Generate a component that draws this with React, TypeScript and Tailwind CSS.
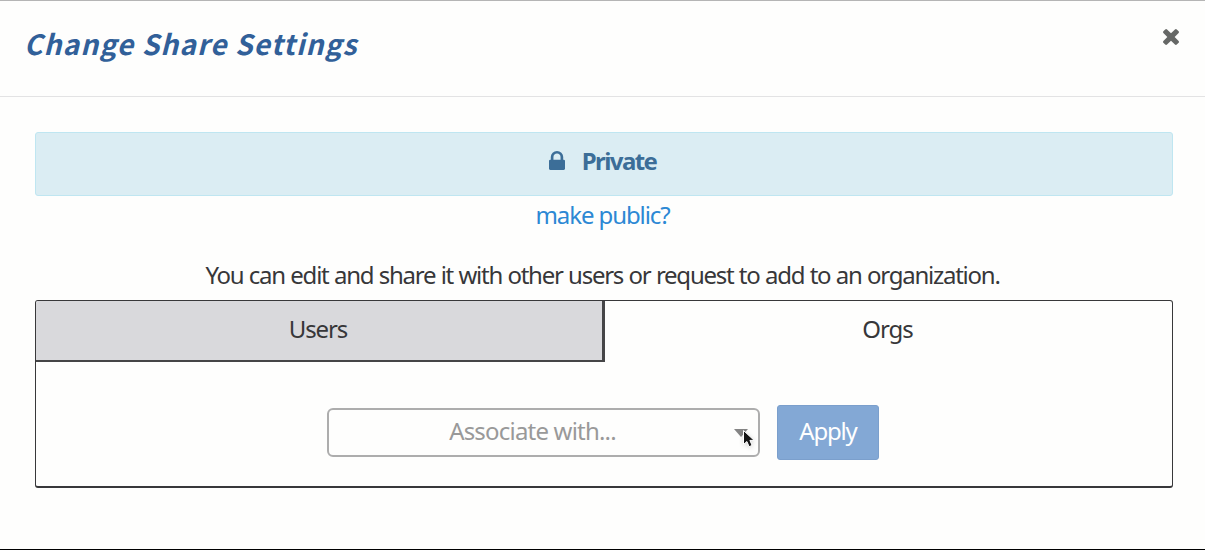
import React from "react";

function LockIcon() {
  return (
    <svg viewBox="0 128 1152 1408" preserveAspectRatio="none" className="mr-[17px] h-[19px] w-4 fill-current">
      <path d="M320 768h512v-192q0-106-75-181t-181-75-181 75-75 181v192zM1152 864v576q0 40-28 68t-68 28h-960q-40 0-68-28t-28-68v-576q0-40 28-68t68-28h32v-192q0-184 132-316t316-132 316 132 132 316v192h32q40 0 68 28t28 68z" />
    </svg>
  );
}

function CloseIcon() {
  return (
    <svg viewBox="110 366 1188 1188" className="size-4 fill-[#666866]">
      <path d="M1298 1322q0 40-28 68l-136 136q-28 28-68 28t-68-28l-294-294-294 294q-28 28-68 28t-68-28l-136-136q-28-28-28-68t28-68l294-294-294-294q-28-28-28-68t28-68l136-136q28-28 68-28t68 28l294 294 294-294q28-28 68-28t68 28l136 136q28 28 28 68t-28 68l-294 294 294 294q28 28 28 68z" />
    </svg>
  );
}

function Pointer() {
  return (
    <svg viewBox="0 0 14 20" className="absolute top-[19px] right-[2px] h-5 w-3.5 drop-shadow-sm">
      <path d="M1.5 1.5v14l3.4-3 2.2 5.2 3-1.3-2.2-5h4.3z" fill="#151515" stroke="#fff" strokeWidth="1" />
    </svg>
  );
}

export default function App() {
  return (
    <div className="relative flex h-[550px] w-[1205px] flex-col overflow-hidden border-t border-b border-t-[#b5b5b5] border-b-black bg-[#fefefd] font-['Noto_Sans',sans-serif] text-2xl leading-8 text-[#373739]">
      <div className="absolute -top-px left-[1134px] h-px w-2 bg-[#8aa6d8]" />
      <header className="flex h-24 shrink-0 items-start justify-between border-b border-[#e3e3e4] pr-[26px] pl-6">
        <h1 className="mt-[22px] font-['Noto_Sans_CJK_SC',sans-serif] text-[28px] leading-10 font-bold tracking-[1.15px] text-[#316099] italic">Change Share Settings</h1>
        <button aria-label="Close" className="mt-7"><CloseIcon /></button>
      </header>
      <main className="flex flex-col px-[35px] pt-[35px]">
        <div className="flex h-16 w-[1138px] items-center justify-center rounded-[3px] border border-[#bfe6f1] bg-[#dbedf3] pr-[3px] pb-[7px] font-bold text-[#3c6e98]">
          <LockIcon />
          <span className="tracking-[-1.6px]">Private</span>
        </div>
        <a className="mt-[3px] text-center tracking-[-1.1px] text-[#2c88d4]">make public?</a>
        <p className="mt-7 text-center tracking-[-1.25px] whitespace-nowrap [word-spacing:0.45px]">
          You can edit and share it with other users or request to add to an organization.
        </p>
        <section className="mt-[9px] h-[188px] w-[1138px] overflow-hidden rounded-[3px] border border-b-2 border-[#38383a]">
          <div className="flex h-[61px]">
            <div className="flex w-[569px] items-center justify-center border-r-[3px] border-b-2 border-[#454547] bg-[#d9d9dc] pr-0.5 pb-[3px] tracking-[-1.1px]">Users</div>
            <div className="flex flex-1 items-center justify-center pr-0.5 pb-[5px] tracking-[-1px]">Orgs</div>
          </div>
          <div className="flex items-start pt-[43px] pl-[291px]">
            <div className="relative mt-[3px] flex h-[49px] w-[433px] items-center justify-center rounded-md border-2 border-[#adadad] pr-[22px] pb-[3px] tracking-[-0.8px] text-[#999]">
              Associate with...
              <svg viewBox="0 0 14 8" className="absolute top-[19px] right-2.5 h-2 w-3.5 fill-[#858585]"><path d="M0 0h14L7 8z" /></svg>
              <Pointer />
            </div>
            <button className="ml-[17px] flex h-[55px] w-[102px] items-center justify-center rounded-[3px] border border-[#7b9fcc] bg-[#83a8d5] pb-[3px] tracking-[-1.2px] text-white">Apply</button>
          </div>
        </section>
      </main>
    </div>
  );
}
